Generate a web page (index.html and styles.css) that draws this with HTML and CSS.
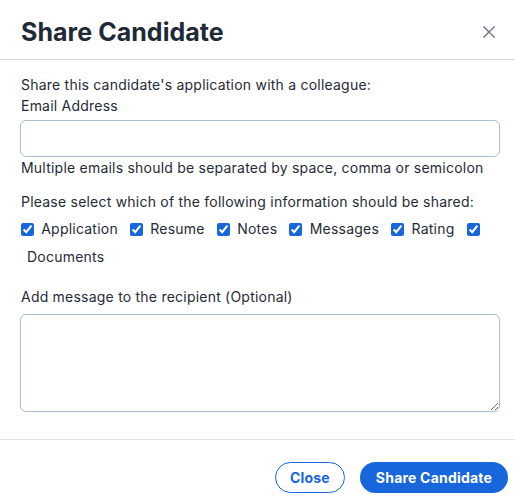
FILE: index.html
```html
<!DOCTYPE html>
<html lang="en">
<head>
    <meta charset="UTF-8">
    <meta name="viewport" content="width=device-width, initial-scale=1.0">
    <title>Share Candidate</title>
    <link rel="stylesheet" href="styles.css">
</head>
<body>
    <div class="modal">
        <div class="modal-header">
            <h1>Share Candidate</h1>
            <button class="fechar" aria-label="Close">
                <svg width="12" height="12" viewBox="0 0 12 12"><path d="M0.5 0.5L11.5 11.5M11.5 0.5L0.5 11.5" stroke="#6b7480" stroke-width="1.4" fill="none"/></svg>
            </button>
        </div>

        <div class="modal-body">
            <p class="linha">Share this candidate's application with a colleague:</p>
            <label class="linha" for="email">Email Address</label>
            <input type="text" id="email" class="campo">
            <p class="linha">Multiple emails should be separated by space, comma or semicolon</p>

            <p class="linha pergunta">Please select which of the following information should be shared:</p>
            <!-- os espaços têm largura zero, só servem pra quebrar a linha -->
            <div class="opcoes">
                <input type="checkbox" id="op1" checked> <label for="op1">Application</label>
                <input type="checkbox" id="op2" checked> <label for="op2">Resume</label>
                <input type="checkbox" id="op3" checked> <label for="op3">Notes</label>
                <input type="checkbox" id="op4" checked> <label for="op4">Messages</label>
                <input type="checkbox" id="op5" checked> <label for="op5">Rating</label>
                <input type="checkbox" id="op6" checked> <label for="op6">Documents</label>
            </div>

            <label class="linha mensagem" for="msg">Add message to the recipient (Optional)</label>
            <textarea id="msg" class="caixa"></textarea>
        </div>

        <div class="modal-footer">
            <button class="botao contorno">Close</button>
            <button class="botao cheio">Share Candidate</button>
        </div>
    </div>
</body>
</html>
```

FILE: styles.css
```css
body {
    margin: 0;
    font-family: Inter, "Noto Sans", sans-serif;
    color: #1f2b38;
    background-color: #fff;
    letter-spacing: 0.22px;
}
.modal {
    width: 515px;
}
.modal-header {
    display: flex;
    justify-content: space-between;
    align-items: center;
    height: 54px;
    padding: 5px 20px 0 21px;
    border-bottom: 1px solid #d3dae1;
}
h1 {
    margin: 0;
    font-size: 25px;
    font-weight: 700;
    color: #1e2a37;
    letter-spacing: 0.05px;
}
.fechar {
    background: none;
    border: none;
    padding: 0;
    cursor: pointer;
    display: flex;
    margin-right: 0;
}
.modal-body {
    padding: 14px 15px 27px 20px;
    font-size: 14px;
}
.linha {
    display: block;
    margin: 0;
    line-height: 21px;
    padding-left: 1px;
}
.campo {
    display: block;
    box-sizing: border-box;
    width: 480px;
    height: 37px;
    margin: 4px 0 0 0;
    border: 1px solid #a9bed2;
    border-radius: 6px;
    font-family: Inter, sans-serif;
    font-size: 14px;
    padding: 0 10px;
}
.pergunta {
    margin-top: 13px;
}
.opcoes {
    font-size: 0;
    line-height: 0;
    margin-top: 3px;
}
.opcoes input {
    accent-color: #1766dc;
    width: 13px;
    height: 13px;
    margin: 0 0 0 1px;
    vertical-align: middle;
}
.opcoes label {
    font-size: 14px;
    line-height: 28px;
    vertical-align: middle;
    margin: 0 11px 0 7px;
}
.mensagem {
    margin-top: 15px;
}
.caixa {
    display: block;
    box-sizing: border-box;
    width: 480px;
    height: 98px;
    margin-top: 7px;
    border: 1px solid #a9bed2;
    border-radius: 6px;
    font-family: Inter, sans-serif;
    font-size: 14px;
}
.modal-footer {
    display: flex;
    justify-content: flex-end;
    gap: 15px;
    padding: 22px 7px 11px 0;
    border-top: 1px solid #dde2e7;
}
.botao {
    height: 31px;
    border-radius: 100px;
    font-family: Inter, sans-serif;
    font-size: 14px;
    font-weight: 700;
    letter-spacing: 0.2px;
    cursor: pointer;
}
.contorno {
    background-color: #fff;
    color: #1766dc;
    border: 1px solid #1766dc;
    padding: 0 14px;
}
.cheio {
    background-color: #1766dc;
    color: #fff;
    border: none;
    padding: 0 16px;
}
```
